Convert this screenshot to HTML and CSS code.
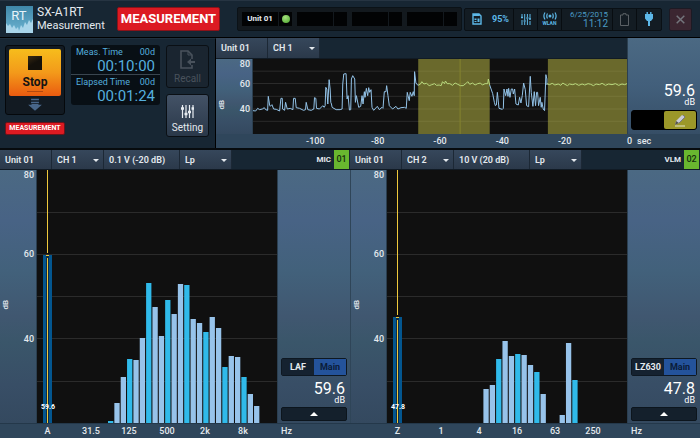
FILE: index.html
```html
<!DOCTYPE html>
<html lang="en">
<head>
    <meta charset="UTF-8">
    <meta name="viewport" content="width=device-width, initial-scale=1.0">
    <title>SX-A1RT Measurement</title>
    <link rel="stylesheet" href="styles.css">
</head>
<body>
    <header class="header">
        <svg class="logo" viewBox="0 0 27 27">
            <defs>
                <linearGradient id="logo-bg" x1="0" y1="0" x2="0" y2="1">
                    <stop offset="0" stop-color="#3f87a8"/>
                    <stop offset="1" stop-color="#6db4d2"/>
                </linearGradient>
            </defs>
            <rect width="27" height="27" fill="url(#logo-bg)"/>
            <path d="M0 27V17l2 3 2-2 2 4 2-3 2 4 2-2 1 4 2-6 2 3 2-6 2 3 2-5 2 3 2-4V27z" fill="#a9d5ea"/>
            <text x="13" y="14" text-anchor="middle" class="logo-text">RT</text>
        </svg>
        <h1 class="title">SX-A1RT<small>Measurement</small></h1>
        <div class="state">MEASUREMENT</div>

        <div class="units">
            <div class="unit"><span>Unit 01</span><span><i class="led"></i></span></div>
            <div class="unit"><span></span><span></span></div>
            <div class="unit"><span></span><span></span></div>
            <div class="unit"><span></span><span></span></div>
        </div>

        <div class="status">
            <div class="cell card">
                <svg width="10" height="12" viewBox="0 0 10 12"><path d="M1 1h6l2 2v8H1z" fill="none" stroke="#5db8e8" stroke-width="1.4"/><path d="M1 1h6l1 2H1z" fill="#5db8e8"/><path d="M2.500 5.500h2v1.500h-2zM2.500 8h2v1h-2zM5.500 5.500h2v3.500h-2z" fill="#5db8e8"/></svg>
                <b>95%</b>
            </div>
            <div class="cell sliders">
                <svg width="10" height="11" viewBox="0 0 10 11"><path d="M1 0v4M1 6v5M3.700 0v6M3.700 8v3M6.400 0v3M6.400 5v6M9 0v5M9 7v4" stroke="#5db8e8"/><path d="M0 3.500h2M2.700 7h2M5.400 4h2M8 5h2" stroke="#5db8e8" stroke-width="1.500"/></svg>
            </div>
            <div class="cell wlan">
                <svg width="14" height="8" viewBox="0 0 14 8"><circle cx="7" cy="4" r="1.500" fill="#5db8e8"/><path d="M4.500 1.500q-1.500 2.500 0 5M9.500 1.500q1.500 2.500 0 5M2 .5q-2.200 3.500 0 7M12 .5q2.200 3.500 0 7" fill="none" stroke="#5db8e8" stroke-width="1.200"/></svg>
                <small>WLAN</small>
            </div>
            <div class="cell clock"><span>6/25/2015</span><time>11:12</time></div>
            <div class="cell battery">
                <svg width="9" height="13" viewBox="0 0 9 13"><path d="M.5 2H3V.7h3V2h2.500v10.500h-8z" fill="none" stroke="#5a6065"/></svg>
            </div>
            <div class="cell plug">
                <svg width="8" height="14" viewBox="0 0 8 14"><path d="M1.500 0h1.400v2h2.200V0h1.400v2H8v4.500L6 9H5v5H3V9H2L0 6.500V2h1.500z" fill="#5db8e8"/></svg>
            </div>
        </div>
        <button class="close" aria-label="Close">
            <svg width="9" height="9" viewBox="0 0 9 9"><path d="M.7.7l7.600 7.600M8.300.7L.7 8.300" stroke="#73757c" stroke-width="1.500"/></svg>
        </button>
    </header>

    <section class="top">
        <div class="controls">
            <div class="run">
                <div class="stop-frame">
                    <button class="stop"><i class="square"></i>Stop<i class="dash"></i></button>
                    <svg width="14" height="13" viewBox="0 0 14 13"><path d="M3 1.500h8M3 4.500h8" stroke="#48668a" stroke-width="1.500"/><path d="M3.500 6h7v1H14l-7 6-7-6h3.500z" fill="#48668a"/></svg>
                </div>
                <div class="tag">MEASUREMENT</div>
            </div>
            <dl class="times">
                <div><dt>Meas. Time <span>00d</span></dt><dd>00:10:00</dd></div>
                <div><dt>Elapsed Time <span>00d</span></dt><dd>00:01:24</dd></div>
            </dl>
            <div class="actions">
                <button class="action" disabled>
                    <svg width="15" height="19" viewBox="0 0 15 19"><path d="M12 9V5L8 1H1v17h11v-3" fill="none" stroke="#49525c" stroke-width="1.600"/><path d="M8 1v4h4" fill="none" stroke="#49525c"/><path d="M7 12l4-3.500v2.500h4v2h-4v2.500z" fill="#49525c"/></svg>
                    Recall
                </button>
                <button class="action">
                    <svg width="13" height="14" viewBox="0 0 13 14"><path d="M1.500 1v13M5 1v13M8.500 1v13M12 1v13" stroke="#e8edf2" stroke-width="1.200"/><path d="M0 4.500h3M3.500 10h3M7 8h3M10.500 4.500H13" stroke="#e8edf2" stroke-width="2.400"/></svg>
                    Setting
                </button>
            </div>
        </div>

        <div class="history">
            <div class="bar">
                <span class="item unit-name">Unit 01</span>
                <div class="item pick"><select aria-label="History channel"><option>CH 1</option><option>CH 2</option></select></div>
            </div>
            <div class="scale">
                <span class="db">dB</span>
                <div class="ticks"><span>80</span><span>60</span><span>40</span></div>
            </div>
            <svg class="plot" viewBox="0 0 1125 225" preserveAspectRatio="none">
                <path class="grid" d="M0 36.500H1125M0 73.500H1125M0 112H1125M0 150H1125M0 187H1125"/>
                <rect class="zone" x="497" width="215" height="225"/>
                <rect class="zone" x="887" width="238" height="225"/>
                <path class="mark" d="M623 0V225"/>
                <polyline class="trace" points="0,155 8,156 14,148 20,152 28,150 34,146 38,152 44,154 46,112 50,138 52,142 57,137 62,150 70,151 80,156 84,118 88,118 89,150 95,154 98,130 103,150 112,148 120,152 122,118 127,118 130,146 140,148 152,154 158,152 160,130 165,152 175,154 183,150 185,116 189,118 191,148 200,150 210,140 214,145 217,140 219,85 222,90 225,135 229,62 232,90 234,130 236,135 238,145 250,152 262,152 268,150 270,75 273,45 280,44 283,120 286,110 290,153 294,152 296,60 300,50 306,60 308,130 311,110 318,145 324,142 328,110 331,135 335,98 337,115 341,88 345,110 348,86 351,100 355,92 358,145 363,154 374,142 380,152 388,145 391,148 395,98 400,98 402,80 406,110 410,140 420,150 430,142 436,150 445,146 456,145 461,148 464,100 470,125 473,100 478,112 482,98 485,110 486,38 490,72 497,80"/>
                <polyline class="trace held" points="497,78 503,76 508,68 514,75 522,73 530,80 538,77 546,74 552,79 560,78 566,80 570,68 576,74 579,66 584,74 592,74 600,79 608,72 616,76 624,80 632,80 640,74 646,68 652,76 660,72 668,78 676,74 684,72 690,78 698,74 706,74 708,60 712,78"/>
                <polyline class="trace" points="712,78 721,104 726,130 729,140 732,138 735,100 740,148 750,151 753,148 755,90 760,110 764,90 767,112 769,88 773,115 777,90 781,90 783,105 787,90 791,135 798,138 802,115 806,132 810,110 814,72 819,92 823,140 829,143 834,52 837,100 842,142 846,98 850,140 853,100 856,100 859,140 864,115 867,145 869,130 873,150 877,155 881,47 884,60 884,78"/>
                <polyline class="trace held" points="884,74 892,77 900,73 908,78 918,75 926,79 932,72 938,76 946,80 952,75 962,77 970,74 980,79 990,75 998,78 1008,74 1016,76 1024,80 1032,75 1042,77 1050,73 1060,79 1070,75 1080,77 1090,74 1100,79 1110,75 1118,77 1125,74"/>
            </svg>
            <aside class="side">
                <p class="value">59.6<small>dB</small></p>
                <div class="marker">
                    <button aria-label="Marker off"></button>
                    <button class="on" aria-label="Edit marker">
                        <svg width="14" height="13" viewBox="0 0 14 13"><path d="M2 11l1-4 6-6 3 2-6 6z" fill="#c9cbd6"/><path d="M3 7l3 2-4 2z" fill="#55534a"/><path d="M10 1l2 2-6 6" fill="none" stroke="#77778a"/><path d="M2 12h10" stroke="#d8d8b0" stroke-width="1.200"/></svg>
                    </button>
                </div>
            </aside>
            <div class="axis time-axis">
                <div><span>-100</span><span>-80</span><span>-60</span><span>-40</span><span>-20</span></div>
                <span>0</span><span class="sec">sec</span>
            </div>
        </div>
    </section>

    <main class="channels">
        <section class="channel">
            <div class="bar">
                <span class="item unit-name">Unit 01</span>
                <div class="item pick"><select aria-label="Channel"><option>CH 1</option><option>CH 2</option></select></div>
                <span class="item range">0.1 V (-20 dB)</span>
                <div class="item pick"><select aria-label="Level type"><option>Lp</option><option>Leq</option></select></div>
                <span class="source">MIC <b>01</b></span>
            </div>
            <div class="scale">
                <span class="db">dB</span>
                <div class="ticks"><span>80</span><span>60</span><span>40</span></div>
            </div>
            <div class="spectrum">
                <svg class="plot" id="spectrum-1" viewBox="0 0 240 253" preserveAspectRatio="none"></svg>
                <span class="level">59.6</span>
            </div>
            <aside class="side">
                <div class="toggle"><button>LAF</button><button class="on">Main</button></div>
                <p class="value">59.6<small>dB</small></p>
                <button class="up" aria-label="More values"><i></i></button>
            </aside>
            <div class="axis freq-axis">
                <div><span>A</span><i></i><span>31.5</span><span>125</span><span>500</span><span>2k</span><span>8k</span></div>
                <span class="hz">Hz</span>
            </div>
        </section>

        <section class="channel">
            <div class="bar">
                <span class="item unit-name">Unit 01</span>
                <div class="item pick"><select aria-label="Channel"><option>CH 2</option><option>CH 1</option></select></div>
                <span class="item range">10 V (20 dB)</span>
                <div class="item pick"><select aria-label="Level type"><option>Lp</option><option>Leq</option></select></div>
                <span class="source">VLM <b>02</b></span>
            </div>
            <div class="scale">
                <span class="db">dB</span>
                <div class="ticks"><span>80</span><span>60</span><span>40</span></div>
            </div>
            <div class="spectrum">
                <svg class="plot" id="spectrum-2" viewBox="0 0 240 253" preserveAspectRatio="none"></svg>
                <span class="level">47.8</span>
            </div>
            <aside class="side">
                <div class="toggle"><button>LZ630</button><button class="on">Main</button></div>
                <p class="value">47.8<small>dB</small></p>
                <button class="up" aria-label="More values"><i></i></button>
            </aside>
            <div class="axis freq-axis">
                <div><span>Z</span><i></i><span>1</span><span>4</span><span>16</span><span>63</span><span>250</span></div>
                <span class="hz">Hz</span>
            </div>
        </section>
    </main>

    <script src="script.js"></script>
</body>
</html>
```
FILE: styles.css
```css
* {
    box-sizing: border-box;
}

body {
    margin: 0;
    min-height: 100vh;
    display: grid;
    grid-template-rows: 38px 112px 1fr;
    background: #070b0e;
    color: #e4e9ee;
    font-family: Roboto, "Liberation Sans", sans-serif;
    font-size: 10px;
    line-height: 12px;
}

button, select {
    font: inherit;
    color: inherit;
    border: 0;
    padding: 0;
    margin: 0;
    cursor: pointer;
}

p, dl, dd, h1 {
    margin: 0;
}

/* header */
.header {
    display: flex;
    align-items: center;
    padding: 0 8px 0 6px;
    background: #172633;
    border-top: 1px solid #263442;
    border-bottom: 1px solid #000;
}

.logo {
    width: 27px;
    height: 27px;
}

.logo-text {
    font-size: 13px;
    fill: #e6f3fa;
}

.title {
    width: 80px;
    margin-left: 4px;
    font-size: 12px;
    line-height: 14px;
    font-weight: 400;
}

.title small {
    display: block;
    font-size: 11px;
}

.state {
    width: 103px;
    height: 24px;
    background: #dc1a22;
    border: 1px solid #8b1219;
    border-radius: 2px;
    color: #fff;
    font-size: 13px;
    line-height: 22px;
    font-weight: 700;
    text-align: center;
}

.units {
    display: flex;
    gap: 5px;
    margin-left: 17px;
    padding: 4px;
    background: #13191e;
    border: 1px solid #0b1217;
    border-radius: 2px;
}

.unit {
    display: grid;
    grid-template-columns: 36px 13px;
    gap: 1px;
    height: 14px;
    font-size: 8px;
    font-weight: 700;
}

.unit span {
    display: flex;
    align-items: center;
    justify-content: center;
    background: #020304;
}

.led {
    width: 8px;
    height: 8px;
    border-radius: 50%;
    background: radial-gradient(circle at 40% 30%, #a5e07c, #4aa52e);
}

.status {
    display: flex;
    height: 23px;
    margin-left: auto;
    background: #131c23;
    border: 1px solid #0a1015;
    border-radius: 2px;
    color: #5db8e8;
}

.cell {
    width: 24px;
    display: flex;
    align-items: center;
    justify-content: center;
    border-right: 1px solid #080d11;
}

.cell:last-child {
    border: 0;
}

.card {
    width: 49px;
    gap: 10px;
    padding-left: 3px;
    font-size: 9px;
}

.wlan {
    flex-direction: column;
}

.wlan small {
    font-size: 5px;
    line-height: 6px;
    font-weight: 700;
}

.clock {
    width: 51px;
    flex-direction: column;
    align-items: flex-end;
    padding-right: 4px;
    font-size: 8px;
    line-height: 9px;
    color: #4b9dc6;
}

.clock time {
    font-size: 10px;
    line-height: 10px;
}

.close {
    width: 23px;
    height: 23px;
    margin-left: 7px;
    display: flex;
    align-items: center;
    justify-content: center;
    background: #3b2631;
    border: 1px solid #1d1a24;
    border-radius: 2px;
}

/* run controls */
.top {
    display: grid;
    grid-template-columns: 216px 1fr;
    padding-bottom: 2px;
}

.controls {
    display: flex;
    gap: 6px;
    padding: 6px 6px 0 5px;
    background: #172633;
    border-top: 1px solid #1f303e;
    border-right: 1px solid #000;
}

.run {
    width: 60px;
}

.stop-frame {
    display: flex;
    flex-direction: column;
    align-items: center;
    gap: 2px;
    height: 70px;
    padding: 3px;
    background: #121a22;
    border: 1px solid #05080b;
    border-radius: 3px;
}

.stop {
    width: 100%;
    height: 48px;
    display: flex;
    flex-direction: column;
    align-items: center;
    padding-top: 7px;
    background: linear-gradient(#f6bd1c, #f39a1a 50%, #ea5b10);
    border-radius: 2px;
    color: #131313;
    font-size: 12px;
    line-height: 24px;
    font-weight: 700;
}

.square {
    flex: none;
    width: 14px;
    height: 14px;
    background: linear-gradient(150deg, #3a2a12, #14100a 50%);
}

.dash {
    flex: none;
    width: 16px;
    height: 1px;
    margin-top: -3px;
    background: #b3480f;
}

.tag {
    margin-top: 7px;
    height: 13px;
    background: #dc1a22;
    border: 1px solid #6d1219;
    border-radius: 2px;
    color: #fff;
    font-size: 7px;
    line-height: 11px;
    font-weight: 700;
    text-align: center;
}

.times {
    width: 89px;
    height: 60px;
    padding: 0 5px;
    background: #080f15;
    border-radius: 3px;
    color: #55aedd;
}

.times div {
    height: 29px;
    padding-top: 1px;
}

.times div + div {
    margin: 0 -5px;
    padding: 1px 5px 0;
    border-top: 1px solid #3a4650;
}

.times dt {
    display: flex;
    justify-content: space-between;
    font-size: 9px;
    line-height: 12px;
}

.times dd {
    font-size: 15px;
    line-height: 16px;
    text-align: right;
}

.actions {
    display: flex;
    flex-direction: column;
    gap: 6px;
}

.action {
    width: 43px;
    height: 43px;
    display: flex;
    flex-direction: column;
    align-items: center;
    justify-content: flex-end;
    gap: 4px;
    padding-bottom: 2px;
    background: linear-gradient(#435266, #2a3849);
    border: 1px solid #0a0f14;
    border-radius: 3px;
}

.action:disabled {
    background: #1a2530;
    color: #49525c;
    cursor: default;
}

/* charts: toolbar on top, scale | plot | side, axis below */
.history, .channel {
    display: grid;
    grid-template-columns: 37px 1fr 73px;
    grid-template-rows: 20px 1fr 15px;
    min-width: 0;
}

.history {
    grid-template-rows: 21px 1fr 14px;
}

.bar {
    grid-column: 1 / -1;
    display: flex;
    background: #172633;
    border-bottom: 1px solid #111b25;
    font-size: 9px;
    font-weight: 600;
}

.history .bar {
    grid-column: 1 / 3;
}

.item {
    display: flex;
    align-items: center;
    padding-left: 5px;
    background: linear-gradient(#36475b, #2b394a);
    border-right: 1px solid #1c2835;
}

.unit-name, .pick {
    width: 52px;
}

.range {
    width: 76px;
}

.pick {
    position: relative;
    padding: 0;
}

.pick select {
    appearance: none;
    width: 100%;
    height: 100%;
    padding-left: 5px;
    background: none;
}

.pick::after {
    content: "";
    position: absolute;
    right: 4px;
    top: 9px;
    border: 3px solid transparent;
    border-top-color: #e4e9ee;
    border-bottom: 0;
    pointer-events: none;
}

.source {
    display: flex;
    align-items: center;
    gap: 3px;
    margin-left: auto;
    padding-right: 1px;
    font-size: 8px;
    font-weight: 700;
}

.source b {
    width: 15px;
    line-height: 19px;
    background: #69b72f;
    color: #16300c;
    font-size: 9px;
    font-weight: 500;
    text-align: center;
}

.scale, .side {
    background: linear-gradient(#4b6983, #486385 20%, #42617b 40%, #405770 58%, #3a566a 68%, #384e66 85%, #34495f);
}

.scale {
    display: flex;
    justify-content: space-between;
    border-right: 1px solid #2b3f50;
}

.db {
    writing-mode: vertical-rl;
    transform: rotate(180deg);
    align-self: center;
    margin-top: 16px;
    font-size: 8px;
    font-weight: 500;
}

.ticks {
    display: grid;
    grid-template-rows: repeat(3, 1fr);
    padding-right: 2px;
    font-size: 9px;
    font-weight: 500;
}

.ticks span {
    margin-top: -6px;
}

.ticks span:first-child {
    margin-top: -1px;
}

.plot {
    display: block;
    width: 100%;
    height: 100%;
    background: #101010;
}

.grid, .mark, .trace, .line {
    fill: none;
    stroke: #2b2b2b;
    vector-effect: non-scaling-stroke;
}

.zone {
    fill: #b5b344;
    fill-opacity: 0.55;
}

.mark {
    stroke: #85842f;
}

.trace {
    stroke: #93c3e8;
}

.held {
    stroke: #b9d97e;
}

.side {
    display: flex;
    flex-direction: column;
    justify-content: flex-end;
    padding: 2px 3px;
    border-left: 1px solid #2b3f50;
}

.history .side {
    grid-row: 1 / 3;
    grid-column: 3;
    padding-bottom: 4px;
    background: linear-gradient(#4b6983, #425f7b 50%, #364e66);
}

.history .plot {
    grid-column: 2;
}

.value {
    padding-right: 2px;
    color: #fff;
    font-size: 16px;
    line-height: 14px;
    text-align: right;
}

.value small {
    display: block;
    font-size: 9px;
    line-height: 9px;
}

.marker {
    display: grid;
    grid-template-columns: 1fr 1fr;
    height: 20px;
    margin-top: 3px;
    background: #000;
    border: 1px solid #000;
    border-radius: 3px;
}

.marker button {
    display: flex;
    align-items: center;
    justify-content: center;
    background: #000;
    border-radius: 2px;
}

.marker .on {
    background: #9b9729;
}

.axis {
    grid-column: 1 / -1;
    display: grid;
    grid-template-columns: 37px 1fr auto;
    align-items: center;
    background: #2f465b;
    font-size: 9px;
    font-weight: 500;
}

.axis div {
    grid-column: 2;
    display: grid;
    text-align: center;
}

.time-axis {
    grid-template-columns: 37px 1fr 10px 63px;
}

.time-axis div {
    grid-template-columns: repeat(5, 2fr);
    padding: 0 8.333%;
}

.freq-axis {
    grid-template-columns: 37px 1fr 73px;
    border-top: 1px solid #24384a;
}

.freq-axis div {
    grid-template-columns: 21fr 14fr repeat(5, 38fr) 15fr;
}

.hz {
    padding-left: 4px;
}

/* spectrum channels */
.channels {
    display: grid;
    grid-template-columns: 1fr 1fr;
}

.channel + .channel .scale {
    border-left: 1px solid #2f4558;
}

.spectrum {
    position: relative;
    min-height: 0;
}

.spectrum .plot {
    position: absolute;
    inset: 0;
}

.level {
    position: absolute;
    left: 4px;
    bottom: 10px;
    color: #fff;
    font-size: 7px;
    font-weight: 700;
}

.band {
    fill: #97c3ea;
}

.octave {
    fill: #30baea;
}

.meter {
    fill: #03568f;
}

.meter-core {
    fill: #0b2c48;
}

.line {
    stroke: #efc93c;
}

.toggle {
    display: grid;
    grid-template-columns: 1fr 1fr;
    height: 18px;
    margin-bottom: 6px;
    border: 1px solid #0e1822;
    border-radius: 2px;
    font-size: 9px;
    font-weight: 700;
}

.toggle button {
    background: #152230;
}

.toggle .on {
    background: #24539b;
    color: #0b1c38;
}

.up {
    display: flex;
    align-items: center;
    justify-content: center;
    height: 14px;
    margin-top: 2px;
    background: #14202c;
    border: 1px solid #0c151d;
    border-radius: 2px;
}

.up i {
    border: 4px solid transparent;
    border-top: 0;
    border-bottom-color: #fff;
}
```
FILE: script.js
```js
// bar heights in plot units (253 = full scale), one per 1/3 octave band
const spectrum1 = [2, 20, 46, 64, 63, 85, 140, 116, 87, 123, 109, 139, 138, 104, 100, 91, 106, 95, 56, 67, 66, 46, 29, 17];
const spectrum2 = [0, 0, 0, 0, 34, 38, 64, 82, 67, 69, 68, 58, 51, 29, 0, 0, 8, 80, 43];

function drawSpectrum(id, bands, level) {
    let out = '<path class="grid" d="M0 42.500H240M0 84.500H240M0 126.500H240M0 168.500H240M0 211.500H240"/>';

    bands.forEach((height, i) => {
        const type = i % 3 === 0 ? 'octave' : 'band';
        out += `<rect class="${type}" x="${71 + i * 6.35}" y="${253 - height}" width="5.3" height="${height}"/>`;
    });

    // overall level meter
    out += `<rect class="meter" x="6" y="${253 - level}" width="9" height="${level}"/>`;
    out += `<rect class="meter-core" x="9" y="${253 - level}" width="3" height="${level}"/>`;
    out += `<path class="line" d="M10.500 0V${251 - level}M10.500 ${256 - level}V253M9 ${253.5 - level}H12"/>`;

    document.getElementById(id).innerHTML = out;
}

drawSpectrum('spectrum-1', spectrum1, 168);
drawSpectrum('spectrum-2', spectrum2, 106);
```
